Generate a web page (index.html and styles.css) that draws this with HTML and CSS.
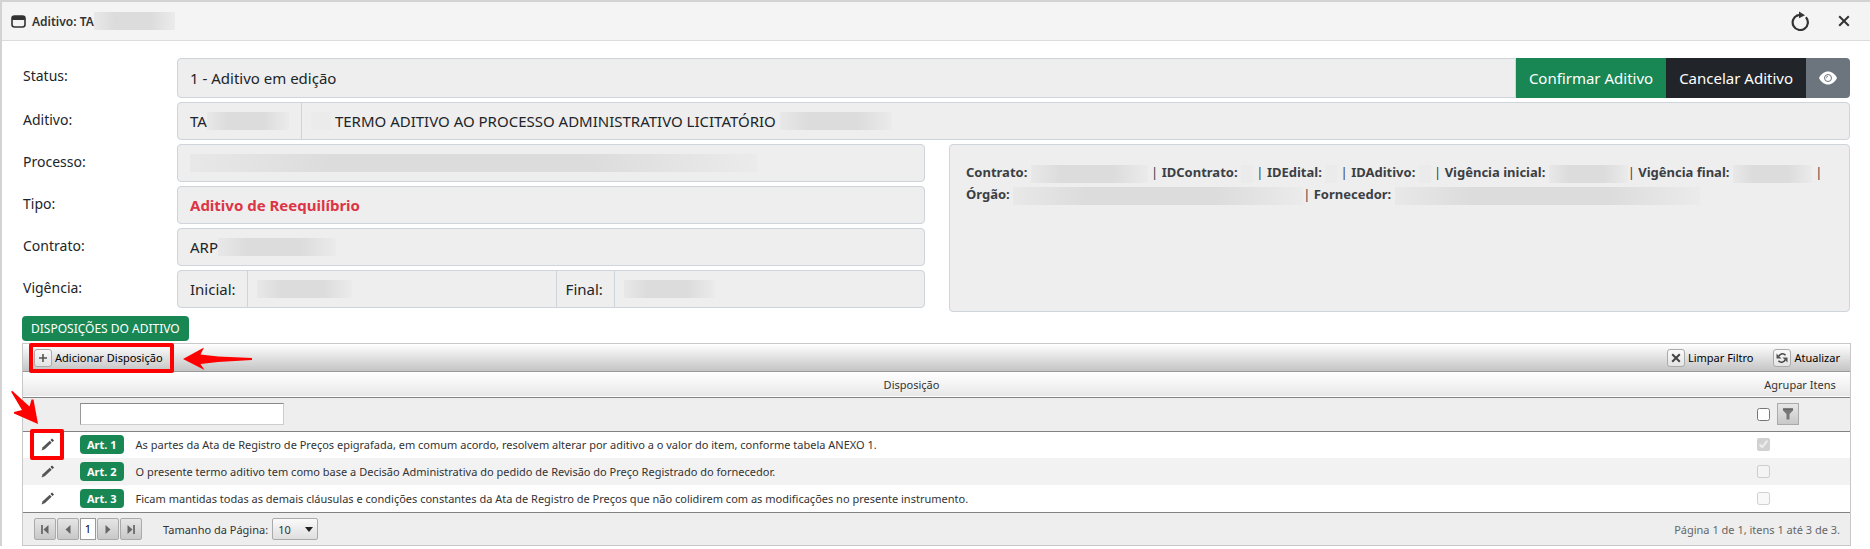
FILE: index.html
```html
<!DOCTYPE html>
<html lang="pt-BR">

<head>
  <meta charset="UTF-8">
  <meta name="viewport" content="width=device-width, initial-scale=1.0">
  <title>Aditivo</title>
  <link rel="stylesheet" href="styles.css">
</head>

<body>
  <div class="window">
    <header class="titlebar">
      <svg class="icon-window" width="15" height="13" viewBox="0 0 15 13">
        <rect x="1" y="1" width="13" height="11" rx="2.5" fill="#f4f4f4" stroke="#333" stroke-width="1.6"/>
        <path d="M1 5V3a2 2 0 0 1 2-2h9a2 2 0 0 1 2 2v2z" fill="#333"/>
      </svg>
      <h1 class="title">Aditivo: TA<span class="blur w81"></span></h1>
      <button type="button" class="title-btn" aria-label="Recarregar">
        <svg width="20" height="20" viewBox="0 0 20 20">
          <path d="M7.6 4.3A7.6 7.6 0 1 0 15.9 6.3" fill="none" stroke="#333" stroke-width="2.2"/>
          <path d="M9 0.5l6 3.8-6 3z" fill="#333"/>
          <path d="M6.5 4.7L10 3.8" stroke="#333" stroke-width="2.2"/>
        </svg>
      </button>
      <button type="button" class="title-btn" aria-label="Fechar">
        <svg width="12" height="12" viewBox="0 0 12 12">
          <path d="M1.2 1.2l9.6 9.6M10.8 1.2L1.2 10.8" stroke="#333" stroke-width="2"/>
        </svg>
      </button>
    </header>

    <main class="content">
      <form class="form">
        <label for="status">Status:</label>
        <div class="group tall full">
          <input type="text" id="status" class="cell grow" value="1 - Aditivo em edição" readonly>
          <button type="button" class="btn btn-success">Confirmar Aditivo</button>
          <button type="button" class="btn btn-dark">Cancelar Aditivo</button>
          <button type="button" class="btn btn-secondary" aria-label="Visualizar">
            <svg width="18" height="14" viewBox="0 0 18 14">
              <path d="M0 7C2 3 5.300 .5 9 .5S16 3 18 7c-2 4-5.300 6.500-9 6.500S2 11 0 7z" fill="#fff"/>
              <circle cx="9" cy="7" r="3.500" fill="none" stroke="#6c757d" stroke-width="1"/>
              <path d="M7.400 7.200A1.800 1.800 0 0 1 9 5.200" fill="none" stroke="#6c757d" stroke-width=".8"/>
            </svg>
          </button>
        </div>

        <label for="aditivo">Aditivo:</label>
        <div class="group full">
          <output id="aditivo" class="cell code">TA<span class="blur w87"></span></output>
          <div class="cell grow"><span class="blur faint w20"></span>&nbsp;TERMO ADITIVO AO PROCESSO ADMINISTRATIVO LICITATÓRIO&nbsp;<span class="blur w112"></span></div>
        </div>

        <label for="processo">Processo:</label>
        <div class="group">
          <output id="processo" class="cell grow"><span class="blur w567"></span></output>
        </div>

        <label for="tipo">Tipo:</label>
        <div class="group">
          <input type="text" id="tipo" class="cell grow danger" value="Aditivo de Reequilíbrio" readonly>
        </div>

        <label for="contrato">Contrato:</label>
        <div class="group">
          <output id="contrato" class="cell grow">ARP<span class="blur w118"></span></output>
        </div>

        <label for="inicial">Vigência:</label>
        <div class="group dates">
          <label class="cell" for="inicial">Inicial:</label>
          <output id="inicial" class="cell period"><span class="blur w95"></span></output>
          <label class="cell" for="final">Final:</label>
          <output id="final" class="cell grow"><span class="blur w91"></span></output>
        </div>

        <section class="summary">
          <b>Contrato:</b> <span class="blur w117"></span> | <b>IDContrato:</b> <span class="blur faint w12"></span> |
          <b>IDEdital:</b> <span class="blur faint w12"></span> | <b>IDAditivo:</b> <span class="blur faint w12"></span> |
          <b>Vigência inicial:</b> <span class="blur w79"></span>| <b>Vigência final:</b> <span class="blur w79"></span> |<br>
          <b>Órgão:</b> <span class="blur w290"></span>| <b>Fornecedor:</b> <span class="blur w305"></span>
        </section>
      </form>

      <h2 class="badge-title">DISPOSIÇÕES DO ADITIVO</h2>

      <section class="grid">
        <div class="toolbar">
          <button type="button" class="tool">
            <span class="tool-icon">
              <svg width="10" height="10" viewBox="0 0 10 10"><path d="M5 1v8M1 5h8" stroke="#555" stroke-width="1.6"/></svg>
            </span>
            Adicionar Disposição
            <span class="mark mark-add"></span>
          </button>
          <button type="button" class="tool push">
            <span class="tool-icon">
              <svg width="10" height="10" viewBox="0 0 10 10"><path d="M1.200 1.200l7.600 7.600M8.800 1.200L1.200 8.800" stroke="#444" stroke-width="2"/></svg>
            </span>
            Limpar Filtro
          </button>
          <button type="button" class="tool">
            <span class="tool-icon">
              <svg width="12" height="12" viewBox="0 0 12 12">
                <path d="M9.500 3.200C7.500 .8 4.500 1.200 2.800 4.200M2.500 8.800c2 2.400 5 2 6.700-1" fill="none" stroke="#444" stroke-width="1.500"/>
                <path d="M.5 1.500v5h5zM11.500 10.500v-5h-5z" fill="#555"/>
              </svg>
            </span>
            Atualizar
          </button>
        </div>

        <table class="table">
          <colgroup>
            <col class="col-edit">
            <col>
            <col class="col-group">
          </colgroup>
          <thead>
            <tr class="head">
              <th></th>
              <th>Disposição</th>
              <th>Agrupar Itens</th>
            </tr>
            <tr class="filter">
              <td></td>
              <td><input type="text" class="filter-text" aria-label="Filtrar Disposição"></td>
              <td>
                <div class="filter-group">
                  <input type="checkbox" aria-label="Filtrar Agrupar Itens">
                  <button type="button" class="filter-btn" aria-label="Filtro">
                    <svg width="12" height="12" viewBox="0 0 12 12"><path d="M1 .5h10v2L7.500 6v5.500h-3V6L1 2.500z" fill="#777"/><path d="M1 1h10" stroke="#555"/></svg>
                  </button>
                </div>
              </td>
            </tr>
          </thead>
          <tbody>
            <tr>
              <td class="edit">
                <button type="button" class="edit-btn" aria-label="Editar Art. 1">
                  <svg width="13" height="13" viewBox="0 0 13 13"><path d="M.5 12.500l1.200-3.200 7-6.500 2 2-7 6.500z" fill="#555"/><path d="M9.500 2l1.500-1.500 2 2L11.500 4z" fill="#444"/></svg>
                  <span class="mark mark-edit"></span>
                </button>
              </td>
              <td><span class="art">Art. 1</span>As partes da Ata de Registro de Preços epigrafada, em comum acordo, resolvem alterar por aditivo a o valor do item, conforme tabela ANEXO 1.</td>
              <td><input type="checkbox" aria-label="Agrupar Art. 1" checked disabled></td>
            </tr>
            <tr>
              <td class="edit">
                <button type="button" class="edit-btn" aria-label="Editar Art. 2">
                  <svg width="13" height="13" viewBox="0 0 13 13"><path d="M.5 12.500l1.200-3.200 7-6.500 2 2-7 6.500z" fill="#555"/><path d="M9.500 2l1.500-1.500 2 2L11.500 4z" fill="#444"/></svg>
                </button>
              </td>
              <td><span class="art">Art. 2</span>O presente termo aditivo tem como base a Decisão Administrativa do pedido de Revisão do Preço Registrado do fornecedor.</td>
              <td><input type="checkbox" aria-label="Agrupar Art. 2" disabled></td>
            </tr>
            <tr>
              <td class="edit">
                <button type="button" class="edit-btn" aria-label="Editar Art. 3">
                  <svg width="13" height="13" viewBox="0 0 13 13"><path d="M.5 12.500l1.200-3.200 7-6.500 2 2-7 6.500z" fill="#555"/><path d="M9.500 2l1.500-1.500 2 2L11.500 4z" fill="#444"/></svg>
                </button>
              </td>
              <td><span class="art">Art. 3</span>Ficam mantidas todas as demais cláusulas e condições constantes da Ata de Registro de Preços que não colidirem com as modificações no presente instrumento.</td>
              <td><input type="checkbox" aria-label="Agrupar Art. 3" disabled></td>
            </tr>
          </tbody>
        </table>

        <footer class="pager">
          <button type="button" class="page-btn" aria-label="Primeira página">
            <svg width="8" height="9" viewBox="0 0 8 9"><path d="M1 0v9" stroke="#555" stroke-width="1.500"/><path d="M7.500 0v9L2.500 4.500z" fill="#666"/></svg>
          </button>
          <button type="button" class="page-btn" aria-label="Página anterior">
            <svg width="6" height="9" viewBox="0 0 6 9"><path d="M5.500 0v9L.5 4.500z" fill="#666"/></svg>
          </button>
          <a href="#" class="page-current">1</a>
          <button type="button" class="page-btn" aria-label="Próxima página">
            <svg width="6" height="9" viewBox="0 0 6 9"><path d="M.5 0v9l5-4.500z" fill="#666"/></svg>
          </button>
          <button type="button" class="page-btn" aria-label="Última página">
            <svg width="8" height="9" viewBox="0 0 8 9"><path d="M7 0v9" stroke="#555" stroke-width="1.500"/><path d="M.5 0v9l5-4.500z" fill="#666"/></svg>
          </button>
          <label class="page-label" for="pageSize">Tamanho da Página:</label>
          <span class="page-size">
            <select id="pageSize">
              <option>10</option>
              <option>20</option>
              <option>50</option>
            </select>
            <svg class="caret" width="8" height="5" viewBox="0 0 8 5"><path d="M0 0h8L4 5z" fill="#222"/></svg>
          </span>
          <span class="page-info">Página 1 de 1, itens 1 até 3 de 3.</span>
        </footer>

        <!-- setas de destaque -->
        <svg class="arrow arrow-add" width="69" height="24" viewBox="0 0 69 24">
          <path d="M0 12L21 0.500l-3.500 7 17.500 2 34 1.500v2l-34 2-17.500 2 4 6z" fill="#f00"/>
        </svg>
        <svg class="arrow arrow-edit" width="28" height="34" viewBox="0 0 28 34">
          <path d="M0 .5L1.500 0l17 15.500 2-7h2L27 33 3 22.500V21l8-2z" fill="#f00"/>
        </svg>
      </section>
    </main>
  </div>
</body>

</html>
```

FILE: styles.css
```css
* {
  box-sizing: border-box;
}

body {
  margin: 0;
  background: #fff;
  color: #212529;
  font-family: "Noto Sans", "Open Sans", sans-serif;
  font-size: 15px;
}

button,
input,
select {
  font: inherit;
  color: inherit;
}

button {
  cursor: pointer;
}

.window {
  border-top: 2px solid #d3d3d3;
  border-left: 2px solid #d3d3d3;
}

/* barra de título */
.titlebar {
  display: flex;
  align-items: center;
  height: 39px;
  padding: 0 20px 0 9px;
  background: #f4f4f4;
  border-bottom: 1px solid #dcdcdc;
}

.title {
  display: flex;
  align-items: center;
  flex: 1;
  margin: 0 0 0 6px;
  font-size: 12px;
  font-weight: 600;
  color: #333;
}

.title-btn {
  display: flex;
  margin-left: 28px;
  padding: 0;
  border: 0;
  background: none;
}

.content {
  padding: 17px 19px 0 20px;
}

/* formulário */
.form {
  display: grid;
  grid-template-columns: 155px 748px minmax(0, 1fr);
  row-gap: 4px;
  padding-right: 1px;
}

.form > label {
  padding: 7px 0 0 1px;
  font-size: 14px;
  line-height: 22px;
}

.group {
  display: flex;
  grid-column: 2;
  height: 38px;
}

.group.tall {
  height: 40px;
}

.group.full {
  grid-column: 2 / 4;
}

.cell {
  display: flex;
  align-items: center;
  min-width: 0;
  padding: 0 12px;
  background: #eee;
  border: 1px solid #ced4da;
  font-size: 15px;
  white-space: nowrap;
}

.cell + .cell {
  margin-left: -1px;
  padding-left: 9px;
}

.dates .cell {
  padding-right: 11px;
}

.cell:first-child {
  border-radius: 4px 0 0 4px;
}

.cell:last-child {
  border-radius: 0 4px 4px 0;
}

.cell:only-child {
  border-radius: 4px;
}

.grow {
  flex: 1;
}

.code {
  width: 125px;
}

.period {
  width: 310px;
}

.danger {
  color: #dc3545;
  font-weight: 700;
}

.btn {
  display: flex;
  align-items: center;
  padding: 0 13px;
  border: 0;
  color: #fff;
  white-space: nowrap;
}

.btn-success {
  background: #198754;
}

.btn-dark {
  background: #212529;
}

.btn-secondary {
  background: #6c757d;
  border-radius: 0 4px 4px 0;
}

.summary {
  grid-column: 3;
  grid-row: 3 / 7;
  margin: 0 0 -4px 24px;
  padding: 16px;
  background: #eee;
  border: 1px solid #ced4da;
  border-radius: 4px;
  color: #3b4045;
  font-size: 13px;
  line-height: 22px;
  white-space: nowrap;
}

/* valores ocultos */
.blur {
  display: inline-block;
  height: 18px;
  background: linear-gradient(90deg, #e8e8e8, #dcdcdc 25%, #dcdcdc 70%, #ebebeb);
  vertical-align: middle;
}

.faint {
  background: #ebebeb;
}

.w12 { width: 12px; }
.w20 { width: 20px; }
.w79 { width: 79px; }
.w81 { width: 81px; }
.w87 { width: 87px; }
.w91 { width: 91px; }
.w95 { width: 95px; }
.w112 { width: 112px; }
.w117 { width: 117px; }
.w118 { width: 118px; }
.w290 { width: 290px; }
.w305 { width: 305px; }
.w567 { width: 567px; }

.badge-title {
  width: fit-content;
  margin: 8px 0 2px;
  padding: 0 9px;
  background: #198754;
  border-radius: 4px;
  color: #fff;
  font-size: 12px;
  font-weight: 400;
  line-height: 25px;
}

/* grade */
.grid {
  position: relative;
  border: 1px solid #c8c8c8;
  font-size: 12px;
}

.toolbar {
  display: flex;
  align-items: center;
  gap: 20px;
  height: 28px;
  padding: 0 10px 0 11px;
  background: linear-gradient(#fff, #c4c4c4);
  border-bottom: 1px solid #999;
}

.tool {
  display: flex;
  position: relative;
  align-items: center;
  gap: 3px;
  padding: 0;
  border: 0;
  background: none;
  color: #000;
  font-size: 11px;
}

.push {
  margin-left: auto;
}

.tool-icon {
  display: flex;
  align-items: center;
  justify-content: center;
  width: 18px;
  height: 18px;
  background: linear-gradient(#fafafa, #e4e4e4);
  border: 1px solid #aaa;
  border-radius: 3px;
}

.table {
  width: 100%;
  border-collapse: collapse;
  table-layout: fixed;
  color: #333;
  font-size: 11px;
}

.col-edit {
  width: 50px;
}

.col-group {
  width: 100px;
}

.table th,
.table td {
  padding: 0 7px;
  text-align: left;
  white-space: nowrap;
}

.table th {
  height: 25px;
  font-weight: 400;
  text-align: center;
}

.table td {
  height: 27px;
}

.head {
  background: linear-gradient(#fff, #e8e8e8);
  border-bottom: 1px solid #828282;
}

.filter {
  background: #eee;
  border-bottom: 1px solid #828282;
}

.table .filter td {
  height: 34px;
}

.table tbody tr:nth-child(even) {
  background: #f2f2f2;
}

.table input[type="checkbox"] {
  display: block;
  width: 13px;
  height: 13px;
  margin: 0;
}

.filter-text {
  display: block;
  width: 204px;
  height: 22px;
  border: 1px solid #ccc;
  border-top-color: #888;
  border-left-color: #999;
  background: #fff;
}

.filter-group {
  display: flex;
  align-items: center;
  gap: 7px;
}

.filter-btn,
.page-btn {
  display: flex;
  align-items: center;
  justify-content: center;
  width: 22px;
  height: 22px;
  padding: 0;
  background: linear-gradient(#e6e6e6, #c8c8c8);
  border: 1px solid #aaa;
}

.edit-btn {
  display: flex;
  position: relative;
  margin-left: 11px;
  padding: 0;
  border: 0;
  background: none;
}

.art {
  display: inline-block;
  margin-right: 12px;
  padding: 0 7px;
  background: #198754;
  border-radius: 4px;
  color: #fff;
  font-weight: 700;
  line-height: 19px;
}

/* paginação */
.pager {
  display: flex;
  align-items: center;
  gap: 1px;
  height: 33px;
  padding: 0 10px 0 11px;
  background: #eee;
  border-top: 1px solid #828282;
  font-size: 11px;
  color: #333;
}

.page-current {
  width: 16px;
  background: #fff;
  border: 1px solid #999;
  color: #000;
  line-height: 20px;
  text-align: center;
  text-decoration: none;
}

.page-btn {
  border-radius: 2px;
}

.page-label {
  margin: 0 3px 0 20px;
}

.page-size {
  display: flex;
  position: relative;
}

.page-size select {
  width: 46px;
  height: 22px;
  padding: 0 5px;
  background: linear-gradient(#fafafa, #dedede);
  border: 1px solid #aaa;
  border-radius: 2px;
  appearance: none;
}

.caret {
  position: absolute;
  top: 9px;
  right: 5px;
  pointer-events: none;
}

.page-info {
  margin-left: auto;
  color: #666;
}

/* destaques */
.mark {
  position: absolute;
  border: 4px solid #f00;
  border-radius: 2px;
  pointer-events: none;
}

.mark-add {
  inset: -6px -11px -6px -5px;
}

.mark-edit {
  inset: -9px -10px -9px -11px;
}

.arrow {
  position: absolute;
  pointer-events: none;
}

.arrow-add {
  top: 3px;
  left: 160px;
}

.arrow-edit {
  top: 47px;
  left: -12px;
}
```
